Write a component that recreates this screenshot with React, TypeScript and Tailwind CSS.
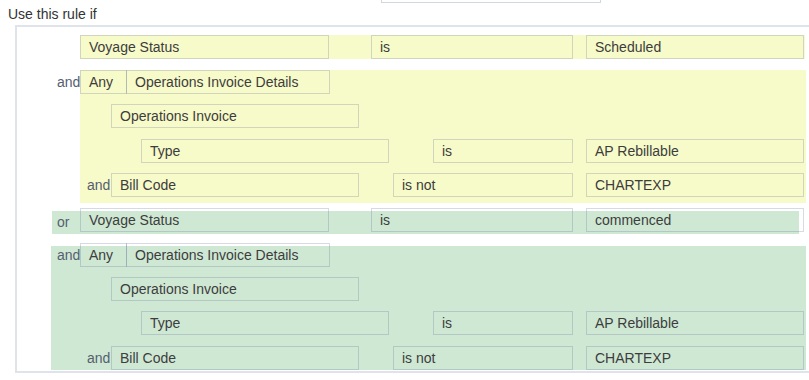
import React from "react";

// field box used in every rule row; the width and offsets come in via className
const Field = ({ children, className = "" }: { children?: React.ReactNode; className?: string }) => (
  <div
    className={
      "h-[24px] shrink-0 flex items-center pl-[8px] border border-[rgba(95,105,150,0.25)] whitespace-nowrap " +
      className
    }
  >
    {children}
  </div>
);

const Joiner = ({ children, className = "" }: { children: React.ReactNode; className?: string }) => (
  <div className={"h-[24px] shrink-0 flex items-center text-[#55606f] " + className}>{children}</div>
);

export default function App() {
  return (
    <div
      className="w-[809px] h-[380px] overflow-hidden bg-white text-[14px] text-[#3d3d3d]"
      style={{ fontFamily: '"Liberation Sans", Arial, sans-serif' }}
    >
      {/* bottom edge of the name input above */}
      <div className="ml-[381px] w-[220px] h-[3px] border-x border-b border-[#d3d7df]" />

      <div className="mt-[3px] ml-[8px] h-[16px] leading-[16px] text-[#333]">Use this rule if</div>

      <div className="mt-[3px] ml-[15px] w-[820px] border-t-2 border-l-2 border-b-2 border-[#dfe3ea] pt-[8px] pb-[1px]">
        {/* first condition */}
        <div className="ml-[63px] w-[725px] h-[24px] bg-[#f7fac9] flex">
          <Field className="w-[249px]">Voyage Status</Field>
          <Field className="ml-[42px] w-[202px]">is</Field>
          <Field className="ml-[13px] w-[218px]">Scheduled</Field>
        </div>

        {/* and Any ... (yellow group) */}
        <div className="mt-[11px] flex">
          <Joiner className="w-[63px] pl-[40px]">and</Joiner>
          <div className="w-[726px] bg-[#f7fac9] pb-[6px] flex flex-col">
            <div className="flex">
              <Field className="w-[47px]">Any</Field>
              <Field className="-ml-px w-[204px]">Operations Invoice Details</Field>
            </div>
            <div className="mt-[10px] flex">
              <Field className="ml-[31px] w-[248px]">Operations Invoice</Field>
            </div>
            <div className="mt-[11px] flex">
              <Field className="ml-[61px] w-[248px]">Type</Field>
              <Field className="ml-[44px] w-[140px]">is</Field>
              <Field className="ml-[13px] w-[218px]">AP Rebillable</Field>
            </div>
            <div className="mt-[10px] flex">
              <Joiner className="w-[31px] pl-[7px]">and</Joiner>
              <Field className="w-[248px]">Bill Code</Field>
              <Field className="ml-[34px] w-[180px]">is not</Field>
              <Field className="ml-[13px] w-[218px]">CHARTEXP</Field>
            </div>
          </div>
        </div>

        {/* or Voyage Status */}
        <div className="mt-[8px] ml-[35px] w-[747px] h-[23px] bg-[#cfe8d4] flex items-start">
          <div className="w-[28px] h-[23px] shrink-0 pl-[5px] flex items-center text-[#55606f]">or</div>
          <div className="-mt-[3px] shrink-0 flex">
            <Field className="w-[249px] border-[#d3d7e0]">Voyage Status</Field>
            <Field className="ml-[42px] w-[202px] border-[#d3d7e0]">is</Field>
            <Field className="ml-[13px] w-[218px] border-[#d3d7e0]">commenced</Field>
          </div>
        </div>

        {/* and Any ... (green group) */}
        <div className="mt-[12px] ml-[34px] w-[755px] bg-[#cfe8d4] flex flex-col">
          <div className="-mt-[3px] flex">
            <Joiner className="w-[29px] pl-[6px]">and</Joiner>
            <Field className="w-[47px]">Any</Field>
            <Field className="-ml-px w-[204px]">Operations Invoice Details</Field>
          </div>
          <div className="mt-[10px] flex">
            <Field className="ml-[60px] w-[248px]">Operations Invoice</Field>
          </div>
          <div className="mt-[10px] flex">
            <Field className="ml-[90px] w-[248px]">Type</Field>
            <Field className="ml-[44px] w-[140px]">is</Field>
            <Field className="ml-[13px] w-[218px]">AP Rebillable</Field>
          </div>
          <div className="mt-[11px] flex">
            <Joiner className="w-[60px] pl-[36px]">and</Joiner>
            <Field className="w-[248px]">Bill Code</Field>
            <Field className="ml-[34px] w-[180px]">is not</Field>
            <Field className="ml-[13px] w-[218px]">CHARTEXP</Field>
          </div>
        </div>
      </div>
    </div>
  );
}
